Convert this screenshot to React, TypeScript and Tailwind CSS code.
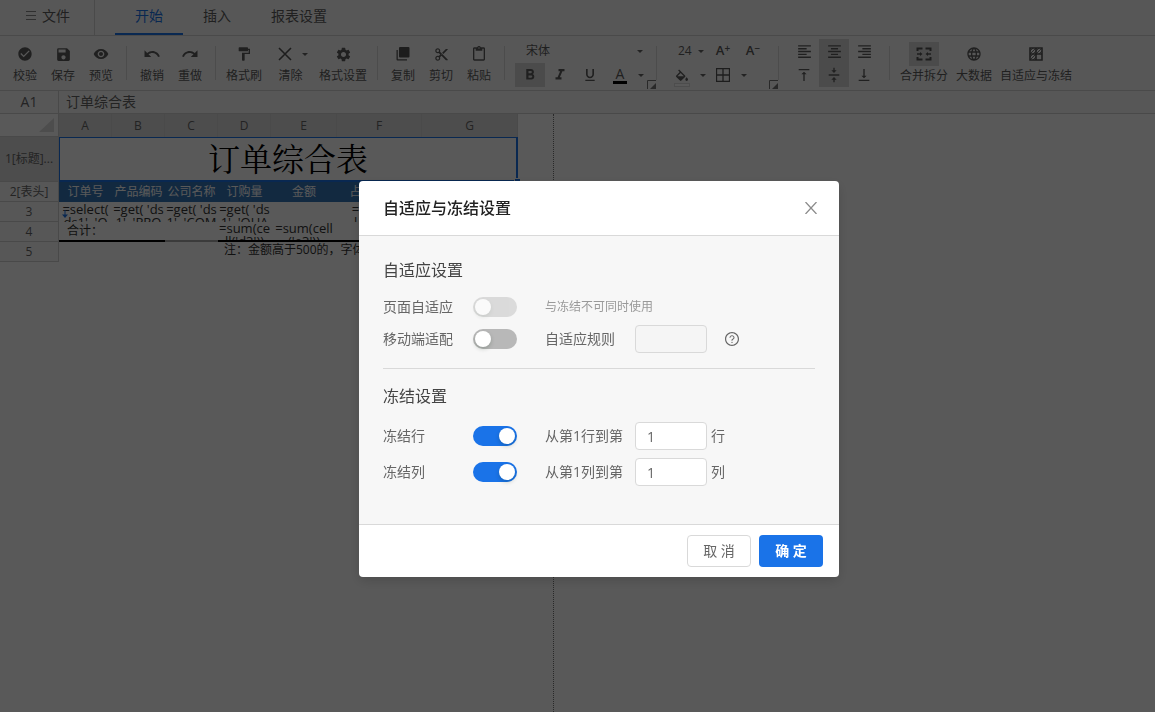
import React from 'react';
import {
  MdCheckCircle,
  MdContentCut,
  MdContentPaste,
  MdFormatAlignCenter,
  MdFormatAlignLeft,
  MdFormatAlignRight,
  MdFormatBold,
  MdFormatColorFill,
  MdFormatItalic,
  MdFormatPaint,
  MdFormatUnderlined,
  MdLanguage,
  MdRedo,
  MdRemoveRedEye,
  MdSave,
  MdSettings,
  MdUndo,
  MdVerticalAlignBottom,
  MdVerticalAlignCenter,
  MdVerticalAlignTop,
} from 'react-icons/md';
import { AiOutlineQuestionCircle } from 'react-icons/ai';

/* ---------- small drawings ---------- */

function Caret() {
  return (
    <svg width="6" height="3" viewBox="0 0 6 3" className="shrink-0 fill-[#666]">
      <path d="M0 0h6L3 3z" />
    </svg>
  );
}

function CopyIcon() {
  return (
    <svg width="14" height="14" viewBox="0 0 14 14" className="fill-[#555]">
      <path d="M4 0h8.500a1 1 0 0 1 1 1v8.500a1 1 0 0 1-1 1H4a1 1 0 0 1-1-1V1a1 1 0 0 1 1-1zM.5 3h1.300v9.200H11v1.300H1.500a1 1 0 0 1-1-1z" />
    </svg>
  );
}

function ClearIcon() {
  return (
    <svg width="14" height="14" viewBox="0 0 14 14" className="fill-none stroke-[#555]">
      <path d="M1 1l12 12M13 1L1 13" strokeWidth="1.600" />
    </svg>
  );
}

function MergeIcon() {
  return (
    <svg width="16" height="14" viewBox="0 0 16 14" className="fill-none stroke-[#555]">
      <path d="M1.500 4V1.500h5M9.500 1.500h5V4M14.500 10v2.500h-5M6.500 12.500h-5V10" strokeWidth="2" />
      <path d="M1 7h3M15 7h-3" strokeWidth="1.500" />
      <path d="M4 5l2.500 2L4 9zM12 5L9.500 7l2.500 2z" className="fill-[#555] stroke-none" />
    </svg>
  );
}

function FreezeIcon() {
  return (
    <svg width="14" height="14" viewBox="0 0 14 14" className="fill-none stroke-[#555]">
      <path d="M1 1h12v12H1zM7 1v12M1 7h12" strokeWidth="1.600" />
      <path d="M1 4l3-3M1 7l6-6M4 7l3-3M7 4l3-3M7 7l6-6M10 7l3-3M1 10l3-3M1 13l6-6M4 13l3-3" strokeWidth="0.800" />
    </svg>
  );
}

function BordersIcon() {
  return (
    <svg width="14" height="14" viewBox="0 0 14 14" className="fill-none stroke-[#555]">
      <path d="M.5.5h13v13H.5z" strokeWidth="1.300" />
      <path d="M7 1v12M1 7h12" strokeWidth="1.300" />
    </svg>
  );
}

function MoreCorner() {
  return (
    <svg width="9" height="9" viewBox="0 0 9 9" className="shrink-0 self-end">
      <path d="M.5 9V.5H9" className="fill-none stroke-[#777]" />
      <path d="M9 3v6H3z" className="fill-[#777]" />
    </svg>
  );
}

/* ---------- ribbon ---------- */

type ToolProps = {
  icon: React.ReactNode;
  label: string;
  width?: string;
  active?: boolean;
  caret?: boolean;
};

function Tool({ icon, label, width = 'w-[38px]', active = false, caret = false }: ToolProps) {
  return (
    <button className={`flex shrink-0 flex-col items-center whitespace-nowrap text-xs ${width}`}>
      <span className={`flex h-6 min-w-[30px] items-center justify-center ${active ? 'bg-[#d8d8d8]' : ''}`}>
        {icon}
        {caret && (
          <span className="-mr-1 pl-2.5">
            <Caret />
          </span>
        )}
      </span>
      <span className="leading-5">{label}</span>
    </button>
  );
}

function IconButton({ children, label, active = false }: { children: React.ReactNode; label: string; active?: boolean }) {
  return (
    <button
      aria-label={label}
      className={`flex h-6 w-[30px] shrink-0 items-center justify-center ${active ? 'bg-[#d8d8d8]' : ''}`}
    >
      {children}
    </button>
  );
}

function FontSizeButton({ sign, label }: { sign: string; label: string }) {
  return (
    <button aria-label={label} className="flex h-6 w-[30px] items-center justify-center text-[13px] font-semibold">
      A<span className="pb-1.5 text-[10px] leading-3">{sign}</span>
    </button>
  );
}

function Separator() {
  return <span className="mt-[7px] h-[34px] w-px shrink-0 bg-[#dadada]" />;
}

function Ribbon() {
  return (
    <div className="flex h-[55px] shrink-0 items-start overflow-hidden border-b border-[#d4d4d4] bg-[#fafafa] pt-[3px] text-[#5c5c5c]">
      <div className="flex w-[126px] shrink-0 pl-1.5 pt-[3px]">
        <Tool label="校验" icon={<MdCheckCircle size={16} />} />
        <Tool label="保存" icon={<MdSave size={17} />} />
        <Tool label="预览" icon={<MdRemoveRedEye size={16} />} />
      </div>
      <Separator />
      <div className="flex w-[88px] shrink-0 pl-1.5 pt-[3px]">
        <Tool label="撤销" icon={<MdUndo size={18} />} />
        <Tool label="重做" icon={<MdRedo size={18} />} />
      </div>
      <Separator />
      <div className="flex w-[161px] shrink-0 pl-1 pt-[3px]">
        <Tool width="w-12" label="格式刷" icon={<MdFormatPaint size={16} />} />
        <Tool width="w-[45px]" label="清除" icon={<ClearIcon />} caret />
        <Tool width="w-[60px]" label="格式设置" icon={<MdSettings size={17} />} />
      </div>
      <Separator />
      <div className="flex w-[126px] shrink-0 pl-1.5 pt-[3px]">
        <Tool label="复制" icon={<CopyIcon />} />
        <Tool label="剪切" icon={<MdContentCut size={15} />} />
        <Tool label="粘贴" icon={<MdContentPaste size={16} />} />
      </div>
      <Separator />
      <div className="flex h-[50px] w-[151px] shrink-0 justify-between pl-[10px]">
        <div className="w-[132px]">
          <button className="flex h-6 w-full items-center justify-between pl-[11px] pr-1 text-xs">
            宋体
            <Caret />
          </button>
          <div className="flex">
            <IconButton label="加粗" active>
              <MdFormatBold size={18} />
            </IconButton>
            <IconButton label="斜体">
              <MdFormatItalic size={18} />
            </IconButton>
            <IconButton label="下划线">
              <MdFormatUnderlined size={16} />
            </IconButton>
            <button aria-label="字体颜色" className="flex h-6 w-[30px] flex-col items-center pt-1 text-sm leading-[14px]">
              A
              <span className="h-[3px] w-[14px] bg-black" />
            </button>
            <span className="flex w-3 items-center justify-center">
              <Caret />
            </span>
          </div>
        </div>
        <MoreCorner />
      </div>
      <Separator />
      <div className="flex h-[50px] w-[121px] shrink-0 justify-between pl-[10px]">
        <div className="w-[102px]">
          <div className="flex">
            <button className="flex h-6 w-[41px] items-center justify-between pl-[11px] pr-1 text-xs">
              24
              <Caret />
            </button>
            <FontSizeButton sign="+" label="增大字号" />
            <FontSizeButton sign="−" label="减小字号" />
          </div>
          <div className="flex">
            <button aria-label="填充颜色" className="flex h-6 w-[30px] flex-col items-center pt-[5px]">
              <MdFormatColorFill size={16} viewBox="0 0 24 18" height={12} />
              <span className="h-1 w-4 border border-[#ddd] bg-white" />
            </button>
            <span className="flex w-[11px] items-center justify-center">
              <Caret />
            </span>
            <IconButton label="边框">
              <BordersIcon />
            </IconButton>
            <span className="flex w-[11px] items-center justify-center">
              <Caret />
            </span>
          </div>
        </div>
        <MoreCorner />
      </div>
      <Separator />
      <div className="grid w-[110px] shrink-0 grid-cols-[30px_30px_30px] pl-[10px]">
        <IconButton label="左对齐">
          <MdFormatAlignLeft size={17} />
        </IconButton>
        <IconButton label="水平居中" active>
          <MdFormatAlignCenter size={17} />
        </IconButton>
        <IconButton label="右对齐">
          <MdFormatAlignRight size={17} />
        </IconButton>
        <IconButton label="顶端对齐">
          <MdVerticalAlignTop size={16} />
        </IconButton>
        <IconButton label="垂直居中" active>
          <MdVerticalAlignCenter size={16} />
        </IconButton>
        <IconButton label="底端对齐">
          <MdVerticalAlignBottom size={16} />
        </IconButton>
      </div>
      <Separator />
      <div className="flex shrink-0 gap-2 pl-[10px] pt-[3px]">
        <Tool width="w-12" label="合并拆分" icon={<MergeIcon />} active />
        <Tool width="w-9" label="大数据" icon={<MdLanguage size={16} />} />
        <Tool width="w-[72px]" label="自适应与冻结" icon={<FreezeIcon />} />
      </div>
    </div>
  );
}

function TabBar() {
  return (
    <nav className="flex h-9 shrink-0 border-b border-[#d4d4d4] bg-[#fafafa] text-sm text-[#5c5c5c]">
      <button className="flex w-[95px] shrink-0 items-center gap-1.5 border-r border-[#d4d4d4] pb-1 pl-[26px]">
        <svg width="10" height="9" viewBox="0 0 10 9" className="stroke-[#888]">
          <path d="M0 .5h10M0 4.500h10M0 8.500h10" />
        </svg>
        文件
      </button>
      <button className="ml-5 border-b-2 border-[#1a73e8] px-5 pb-0.5 text-[#1a73e8]">开始</button>
      <button className="px-5 pb-1">插入</button>
      <button className="px-5 pb-1">报表设置</button>
    </nav>
  );
}

/* ---------- sheet ---------- */

const columns = ['A', 'B', 'C', 'D', 'E', 'F', 'G'];
const headings = ['订单号', '产品编码', '公司名称', '订购量', '金额', '占总金额比', ''];

function RowHeader({ children, selected = false }: { children: React.ReactNode; selected?: boolean }) {
  return (
    <th
      scope="row"
      className={`border-b border-r border-[#d0d0d0] p-0 text-xs leading-4 font-normal text-[#666] ${selected ? 'bg-[#dcdcdc]' : 'bg-[#fafafa]'}`}
    >
      {children}
    </th>
  );
}

function Formula({ lines, height = 'h-[19px]' }: { lines?: string[]; height?: string }) {
  return (
    <div className={`overflow-hidden text-center text-[13px] leading-[13px] whitespace-pre text-[#333] ${height}`}>
      {lines?.join('\n')}
    </div>
  );
}

const dataRow: (string[] | undefined)[] = [
  ['=select(', "ds1', 'O"],
  ["=get( 'ds", "1', 'PRO"],
  ["=get( 'ds", "1', 'COM"],
  ["=get( 'ds", "1', 'QUA"],
  undefined,
  ["=cell('e3')", "l 'e3', 'su"],
  undefined,
];

const totalRow: { lines?: string[]; border: string }[] = [
  { border: 'border-black' },
  { border: 'border-[#aaa]' },
  { lines: ['=sum(ce', "ll('d3'))"], border: 'border-black' },
  { lines: ['=sum(cell', "('e3'))"], border: 'border-black' },
  { border: 'border-black' },
  { border: 'border-black' },
];

function Sheet() {
  return (
    <main className="flex min-h-0 flex-1 bg-white">
      <div className="w-[554px] shrink-0 border-r border-dotted border-[#777]">
        <table className="w-[518px] table-fixed border-separate border-spacing-0">
          <colgroup>
            <col className="w-[59px]" />
            <col className="w-[53px]" />
            <col className="w-[53px]" />
            <col className="w-[53px]" />
            <col className="w-[53px]" />
            <col className="w-[66px]" />
            <col className="w-[85px]" />
            <col className="w-[96px]" />
          </colgroup>
          <thead>
            <tr className="h-[23px]">
              <td className="border-b border-r border-[#d0d0d0] p-0">
                <svg width="15" height="14" viewBox="0 0 15 14" className="mr-1 ml-auto fill-[#dcdcdc]">
                  <path d="M15 0v14H0z" />
                </svg>
              </td>
              {columns.map((name) => (
                <th
                  key={name}
                  scope="col"
                  className="border-r border-[#d4d4d4] bg-[#dcdcdc] p-0 text-xs leading-4 font-normal text-[#666]"
                >
                  {name}
                </th>
              ))}
            </tr>
          </thead>
          <tbody>
            <tr className="h-[45px]">
              <RowHeader selected>1[标题]...</RowHeader>
              <td
                colSpan={7}
                className="relative border-t border-r-2 border-b-2 border-l border-[#1a73e8] p-0 pb-1 text-center font-['Noto_Serif_CJK_SC','Noto_Sans_CJK_SC',serif] text-[32px] leading-[38px] font-normal text-black"
              >
                订单综合表
                <span className="absolute -right-1 -bottom-1 size-1.5 border-t border-l border-white bg-[#1a73e8]" />
              </td>
            </tr>
            <tr className="h-5">
              <RowHeader>2[表头]</RowHeader>
              {headings.map((heading, i) => (
                <td key={i} className="bg-[#3476b8] p-0 text-center text-xs leading-4 whitespace-nowrap text-white">
                  {heading}
                </td>
              ))}
            </tr>
            <tr className="h-5">
              <RowHeader>3</RowHeader>
              {dataRow.map((lines, i) => (
                <td key={i} className="relative p-0 pt-px">
                  <Formula lines={lines} />
                  {i === 0 && (
                    <svg width="6" height="8" viewBox="0 0 6 8" className="absolute bottom-1 left-[3px]">
                      <path d="M3 0v6" className="stroke-[#1a73e8]" />
                      <path d="M0 4.500h6L3 8z" className="fill-[#1a73e8]" />
                    </svg>
                  )}
                </td>
              ))}
            </tr>
            <tr className="h-5">
              <RowHeader>4</RowHeader>
              <td className="border-b-2 border-black p-0 pl-2 text-xs leading-4 text-[#333]">合计：</td>
              {totalRow.map(({ lines, border }, i) => (
                <td key={i} className={`border-b-2 p-0 ${border}`}>
                  <Formula lines={lines} height="h-[18px]" />
                </td>
              ))}
            </tr>
            <tr className="h-5">
              <RowHeader>5</RowHeader>
              <td colSpan={3} className="p-0" />
              <td colSpan={4} className="p-0 pb-1 pl-1.5 text-xs leading-4 whitespace-nowrap text-[#333]">
                注：金额高于500的，字体显示为红色
              </td>
            </tr>
          </tbody>
        </table>
      </div>
    </main>
  );
}

/* ---------- dialog ---------- */

function Switch({ id, defaultChecked = false, disabled = false }: { id: string; defaultChecked?: boolean; disabled?: boolean }) {
  return (
    <input
      id={id}
      type="checkbox"
      role="switch"
      defaultChecked={defaultChecked}
      disabled={disabled}
      className="mr-7 h-5 w-11 shrink-0 appearance-none rounded-full bg-[#b8b8b8] p-0.5 before:block before:size-4 before:rounded-full before:bg-white before:shadow-[0_2px_4px_rgba(0,35,11,0.2)] checked:bg-[#1a73e8] checked:before:ml-6 disabled:opacity-45"
    />
  );
}

const fieldBox = 'h-7 w-[72px] rounded-sm border border-[#d9d9d9] px-[11px] text-sm';

function FreezeRow({ unit, id }: { unit: string; id: string }) {
  return (
    <div className="flex h-7 items-center">
      <label htmlFor={`${id}-switch`} className="w-[90px]">
        冻结{unit}
      </label>
      <Switch id={`${id}-switch`} defaultChecked />
      <label htmlFor={`${id}-count`} className="w-[90px]">
        从第1{unit}到第
      </label>
      <input id={`${id}-count`} defaultValue="1" className={`${fieldBox} bg-white`} />
      <span className="pl-1">{unit}</span>
    </div>
  );
}

function SettingsDialog() {
  return (
    <div className="fixed inset-0 flex items-center justify-center bg-black/65 pt-[46px] pl-[43px]">
      <section
        role="dialog"
        aria-modal="true"
        aria-labelledby="dialog-title"
        className="w-[480px] overflow-hidden rounded bg-white text-sm text-[#666] shadow-[0_4px_12px_rgba(0,0,0,0.15)]"
      >
        <header className="flex h-[55px] items-center justify-between border-b border-[#d9d9d9] pr-[22px] pl-6">
          <h2 id="dialog-title" className="text-base font-medium text-[#222]">
            自适应与冻结设置
          </h2>
          <button aria-label="关闭">
            <svg width="12" height="12" viewBox="0 0 12 12" className="fill-none stroke-[#8c8c8c]">
              <path d="M.5 0l11 12M11.500 0l-11 12" strokeWidth="1.300" />
            </svg>
          </button>
        </header>
        <div className="bg-[#f7f7f7] px-6 pt-[22px] pb-[38px]">
          <h3 className="mb-[11px] text-base text-[#444]">自适应设置</h3>
          <div className="flex h-7 items-center">
            <label htmlFor="page-fit" className="w-[90px]">
              页面自适应
            </label>
            <Switch id="page-fit" disabled />
            <span className="text-xs text-[#999]">与冻结不可同时使用</span>
          </div>
          <div className="mt-1 flex h-7 items-center">
            <label htmlFor="mobile-fit" className="w-[90px]">
              移动端适配
            </label>
            <Switch id="mobile-fit" />
            <label htmlFor="fit-rule" className="w-[90px]">
              自适应规则
            </label>
            <input id="fit-rule" disabled className={`${fieldBox} bg-[#f5f5f5]`} />
            <AiOutlineQuestionCircle size={16} className="ml-[17px]" />
          </div>
          <hr className="mt-[15px] mb-[15px] border-[#d9d9d9]" />
          <h3 className="mb-3.5 text-base text-[#444]">冻结设置</h3>
          <div className="flex flex-col gap-2">
            <FreezeRow unit="行" id="freeze-row" />
            <FreezeRow unit="列" id="freeze-column" />
          </div>
        </div>
        <footer className="flex justify-end gap-2 border-t border-[#d9d9d9] px-4 py-2.5">
          <button className="h-8 w-16 rounded-sm border border-[#d9d9d9] bg-white">取 消</button>
          <button className="h-8 w-16 rounded-sm bg-[#1a73e8] font-bold text-white">确 定</button>
        </footer>
      </section>
    </div>
  );
}

export default function App() {
  return (
    <div className="flex h-screen flex-col overflow-hidden bg-white font-['Open_Sans','Noto_Sans_CJK_SC',sans-serif]">
      <TabBar />
      <Ribbon />
      <div className="flex h-[23px] shrink-0 items-center border-b border-[#d0d0d0] bg-[#fafafa] text-sm text-[#666]">
        <span className="flex h-full w-[59px] shrink-0 items-center justify-center border-r border-[#d0d0d0]">A1</span>
        <span className="pl-[7px]">订单综合表</span>
      </div>
      <Sheet />
      <SettingsDialog />
    </div>
  );
}
